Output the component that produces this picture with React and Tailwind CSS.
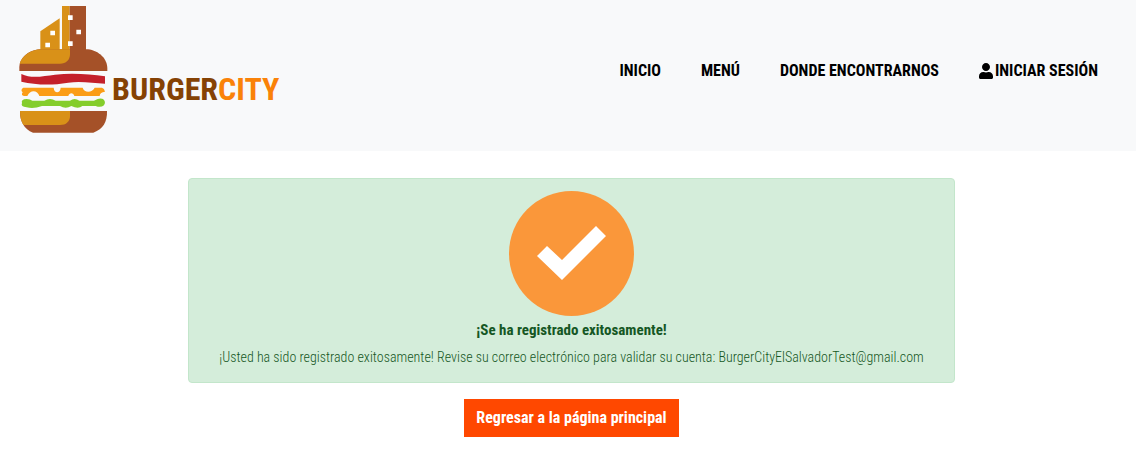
import React from "react";
import { FaUser } from "react-icons/fa";

function BurgerLogo() {
  return (
    <svg viewBox="57 15 267 384" className="h-32 w-[89px] shrink-0" aria-hidden="true">
      <path d="M121 150V94L179 55V150Z" fill="#d99118" />
      <path d="M186 18H209V152H186Z" fill="#d99118" />
      <path d="M209 18H258V152H209Z" fill="#a55128" />
      <path d="M58 213V200C60 170 90 148 125 148H258C290 148 321 172 322 204V213Z" fill="#a55128" />
      <path d="M59 191C66 168 92 148 125 148H210V162C210 180 198 191 180 191Z" fill="#d99118" />
      <path d="M204 46h14v14h-14zM229 89h14v14h-14zM204 124h14v14h-14zM151 92h14v14h-14zM136 128h14v14h-14z" fill="#fff" />
      <path d="M64 222C95 237 130 228 165 224C220 218 270 223 315 229V251C280 249 240 243 205 248C145 258 105 253 64 245Z" fill="#c4202b" />
      <path d="M70 263H161C162 281 181 281 182 263H248C252 279 276 280 284 263H306Q313 265 315 275Q300 276 299 288H223C220 277 208 277 205 288H118C113 270 90 268 82 288H72Q62 286 68 277Q60 269 70 263Z" fill="#fb9d17" />
      <path d="M80 297Q91 297 97 302H133Q150 292 167 302H210Q224 292 238 302H282Q307 289 314 303Q317 310 312 316Q302 324 287 318H247Q235 328 214 318Q197 328 180 318H126Q100 328 80 322Q61 320 66 309Q62 298 80 297Z" fill="#84cd2b" />
      <path d="M60 333H321C322 365 310 387 280 398H99C72 388 59 363 60 333Z" fill="#a55128" />
      <path d="M60 333H210V348C210 365 198 375 180 375H70Q60 357 60 333Z" fill="#d99118" />
    </svg>
  );
}

function NavLink({ children }) {
  return (
    <a href="#" className="flex items-center gap-0.5 whitespace-nowrap text-base leading-6 font-bold text-black">
      {children}
    </a>
  );
}

export default function App() {
  return (
    <div className="min-h-screen bg-white font-['Roboto_Condensed','Lato',sans-serif]">
      <header className="flex items-start justify-between bg-[#f8f9fa] pt-[5px] pr-[38px] pb-[18px] pl-[19px]">
        <a href="#" className="flex items-center gap-1">
          <BurgerLogo />
          <span className="pt-10 text-[32px] leading-10 font-bold text-[#854204]">
            BURGER<span className="text-[#fa8208]">CITY</span>
          </span>
        </a>
        <nav className="flex gap-10 pt-[54px]">
          <NavLink>INICIO</NavLink>
          <NavLink>MENÚ</NavLink>
          <NavLink>DONDE ENCONTRARNOS</NavLink>
          <NavLink>
            <FaUser className="h-4 w-[14px]" />
            INICIAR SESIÓN
          </NavLink>
        </nav>
      </header>

      <main className="flex flex-col items-center gap-4 pt-[27px] pl-[7px]">
        <div
          role="alert"
          className="flex w-full max-w-[767px] flex-col items-center rounded border border-[#c3e6cb] bg-[#d4edda] px-4 py-3 text-center text-[#155724]"
        >
          <svg viewBox="0 0 125 125" className="size-[125px]" aria-hidden="true">
            <circle cx="62.5" cy="62.5" r="62.5" fill="#fa973a" />
            <path d="M28 65L38 55L53 69L87 35L97 45L53 89Z" fill="#fff" />
          </svg>
          <strong className="text-[15px] leading-7 font-bold">¡Se ha registrado exitosamente!</strong>
          <p className="text-[14px] leading-[26px] font-light">
            ¡Usted ha sido registrado exitosamente! Revise su correo electrónico para validar su cuenta: BurgerCityElSalvadorTest@gmail.com
          </p>
        </div>
        <button type="button" className="bg-[#ff4800] px-3 py-[7px] text-base leading-6 font-bold text-white">
          Regresar a la página principal
        </button>
      </main>
    </div>
  );
}
